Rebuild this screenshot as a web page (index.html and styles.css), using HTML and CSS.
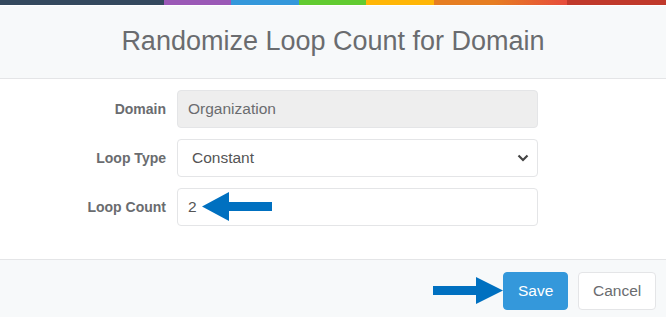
FILE: index.html
```html
<!DOCTYPE html>
<html lang="en">
<head>
  <meta charset="UTF-8" />
  <title>Randomize Loop Count for Domain</title>
  <link rel="stylesheet" href="styles.css">
</head>
<body>
  <div class="modal">
    <div class="color-line">
      <span class="c-dark"></span>
      <span class="c-purple"></span>
      <span class="c-blue"></span>
      <span class="c-green"></span>
      <span class="c-yellow"></span>
      <span class="c-orange"></span>
      <span class="c-red"></span>
    </div>

    <header class="modal-header">
      <h4>Randomize Loop Count for Domain</h4>
    </header>

    <div class="modal-body">
      <form class="form-grid">
        <label>Domain</label>
        <div class="field disabled">Organization</div>

        <label>Loop Type</label>
        <div class="field select">
          <span>Constant</span>
          <svg class="chevron" width="12" height="8" viewBox="0 0 12 8">
            <path d="M1.5 1.5 L6 6 L10.5 1.5" fill="none" stroke="#444" stroke-width="2.2"/>
          </svg>
        </div>

        <label>Loop Count</label>
        <div class="field count">
          <span>2</span>
          <svg class="note-arrow left" width="70" height="29" viewBox="0 0 70 29">
            <path d="M0 14.5 L27 0 L27 10 L70 10 L70 19 L27 19 L27 29 Z" fill="#0070c0"/>
          </svg>
        </div>
      </form>
    </div>

    <footer class="modal-footer">
      <svg class="note-arrow" width="70" height="27" viewBox="0 0 70 27">
        <path d="M70 13.5 L43 0 L43 9 L0 9 L0 18 L43 18 L43 27 Z" fill="#0070c0"/>
      </svg>
      <button class="btn btn-primary" type="button">Save</button>
      <button class="btn btn-default" type="button">Cancel</button>
    </footer>
  </div>
</body>
</html>
```

FILE: styles.css
```css
body {
  margin: 0;
  font-family: "Liberation Sans", Arial, sans-serif;
  color: #6a6c6f;
  background: #fff;
}
.modal {
  width: 666px;
  height: 317px;
  overflow: hidden;
}
.color-line {
  display: flex;
  height: 5px;
  border-bottom: 1px solid rgba(255,255,255,0.35);
}
.color-line span {
  display: block;
  height: 5px;
}
.c-dark { width: 164px; background: #34495e; }
.c-purple { width: 67px; background: #9b59b6; }
.c-blue { width: 68px; background: #3498db; }
.c-green { width: 67px; background: #62cb31; }
.c-yellow { width: 68px; background: #ffb606; }
.c-orange { width: 133px; background: linear-gradient(to right, #e67e22 0%, #e67e22 45%, #e74c3c 100%); }
.c-red { flex: 1; background: #c0392b; }

.modal-header {
  background: #f7f9fa;
  height: 72px;
  border-bottom: 1px solid #e4e5e7;
  display: flex;
  align-items: center;
  justify-content: center;
}
.modal-header h4 {
  margin: 0 0 2px;
  font-size: 27px;
  font-weight: 400;
  color: #6a6c6f;
}

.modal-body {
  height: 169px;
  padding-top: 11px;
}
.form-grid {
  display: grid;
  grid-template-columns: 166px 361px;
  column-gap: 11px;
  row-gap: 11px;
  align-items: center;
}
.form-grid label {
  text-align: right;
  font-size: 14px;
  font-weight: 700;
  color: #6a6c6f;
}
.field {
  box-sizing: border-box;
  height: 38px;
  border: 1px solid #e4e5e7;
  border-radius: 4px;
  padding: 0 10px;
  display: flex;
  align-items: center;
  font-size: 15.5px;
  color: #6a6c6f;
  background: #fff;
}
.field.disabled {
  background: #eeeeee;
}
.field.select {
  justify-content: space-between;
  padding-left: 14px;
  color: #555;
  padding-right: 8px;
}
.field.count {
  position: relative;
  color: #555;
}
.note-arrow.left {
  position: absolute;
  left: 24px;
  top: 3px;
}

.modal-footer {
  border-top: 1px solid #e4e5e7;
  background: #f7f9fa;
  height: 58px;
  box-sizing: border-box;
  padding: 12px 10px 0 0;
  display: flex;
  justify-content: flex-end;
  align-items: flex-start;
}
.modal-footer .note-arrow {
  margin-top: 5px;
}
.btn {
  height: 38px;
  border-radius: 4px;
  font-family: "Liberation Sans", Arial, sans-serif;
  font-size: 15.5px;
  padding: 0 14px;
  cursor: pointer;
}
.btn-primary {
  background: #3498db;
  border: 1px solid #3498db;
  color: #fff;
  width: 65px;
}
.btn-default {
  background: #fff;
  border: 1px solid #e4e5e7;
  color: #6a6c6f;
  margin-left: 10px;
  width: 78px;
}
```
